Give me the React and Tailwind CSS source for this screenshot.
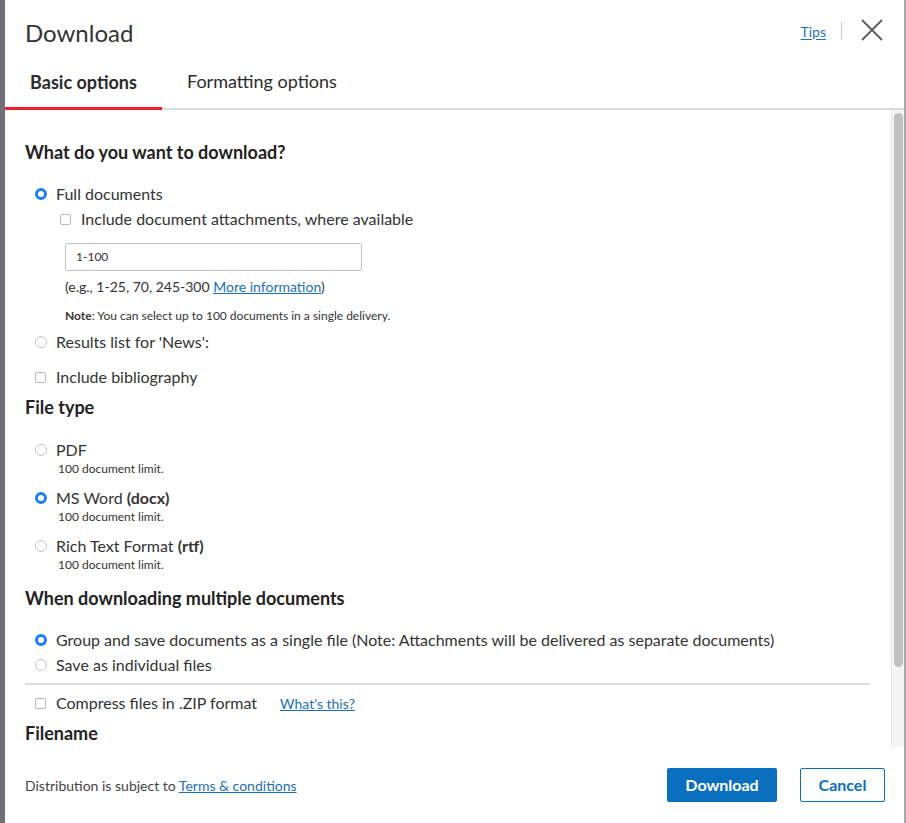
import React from "react";

function Radio({ checked }) {
  return checked ? (
    <span className="inline-block w-[12px] h-[12px] rounded-full bg-[#1a7ef2] border-[3.5px] border-[#1a7ef2] shrink-0">
      <span className="block w-full h-full rounded-full bg-white" />
    </span>
  ) : (
    <span className="inline-block w-[12px] h-[12px] rounded-full border border-[#c4c4c4] bg-white shrink-0" />
  );
}

function Check() {
  return <span className="inline-block w-[11px] h-[11px] rounded-[2px] border border-[#b9b9b9] bg-white shrink-0" />;
}

export default function App() {
  return (
    <div
      className="w-[906px] h-[823px] flex bg-[#6d7075] overflow-hidden text-[#333]"
      style={{ fontFamily: "Lato, 'Open Sans', sans-serif" }}
    >
      <div className="w-[5px] shrink-0" />
      <div className="flex-1 bg-white flex flex-col border-r-2 border-[#a9a9a9]">
        {/* header */}
        <div className="h-[62px] flex items-center pl-[20px] pr-[21px] pt-[4px]">
          <h1 className="text-[24px] text-[#333] flex-1 leading-none">Download</h1>
          <a className="text-[14px] text-[#1d6fb8] underline underline-offset-2 -mt-[4px]">Tips</a>
          <span className="w-px h-[17px] bg-[#c6c6c6] ml-[15px] mr-[19px] -mt-[6px]" />
          <svg width="22" height="22" viewBox="0 0 22 22" className="-mt-[6px]">
            <path d="M1 1L21 21M21 1L1 21" stroke="#5b5b5b" strokeWidth="1.8" fill="none" />
          </svg>
        </div>
        {/* tabs */}
        <div className="flex h-[48px] border-b-2 border-[#dcdcdc]">
          <div className="w-[157px] flex items-center justify-center text-[18px] font-bold text-[#2b2b2b] border-b-[3px] border-[#ee1c2e] -mb-[2px] pb-[4px]">
            Basic options
          </div>
          <div className="pl-[25px] flex items-center text-[18px] text-[#2b2b2b] pb-[7px]">Formatting options</div>
        </div>
        {/* body */}
        <div className="h-[637px] flex">
          <div className="flex-1 pl-[20px] pr-[19px] pt-[30px] overflow-hidden text-[16px]">
            <h2 className="text-[18px] font-bold text-[#222] leading-[24px]">What do you want to download?</h2>
            <div className="mt-[20px] flex items-center gap-[9px] pl-[10px] h-[20px]">
              <Radio checked />
              <span>Full documents</span>
            </div>
            <div className="mt-[5px] flex items-center gap-[10px] pl-[35px] h-[20px]">
              <Check />
              <span>Include document attachments, where available</span>
            </div>
            <div className="mt-[14px] ml-[40px] w-[297px] h-[28px] border border-[#c2c2c2] rounded-[2px] flex items-center pl-[10px] text-[12px] text-[#333]">
              1-100
            </div>
            <div className="mt-[7px] ml-[40px] text-[14px] leading-[18px]">
              (e.g., 1-25, 70, 245-300 <a className="text-[#1d6fb8] underline">More information</a>)
            </div>
            <div className="mt-[12px] ml-[40px] text-[12px] leading-[16px]">
              <b>Note</b>: You can select up to 100 documents in a single delivery.
            </div>
            <div className="mt-[8px] flex items-center gap-[9px] pl-[10px] h-[20px]">
              <Radio />
              <span>Results list for 'News':</span>
            </div>
            <div className="mt-[15px] flex items-center gap-[10px] pl-[10px] h-[20px]">
              <Check />
              <span>Include bibliography</span>
            </div>
            <h2 className="mt-[8px] text-[18px] font-bold text-[#222] leading-[24px]">File type</h2>
            {[
              ["PDF", null, false],
              ["MS Word ", "(docx)", true],
              ["Rich Text Format ", "(rtf)", false],
            ].map(([a, b, c], i) => (
              <div key={i} className={i === 0 ? "mt-[21px]" : "mt-[10px]"}>
                <div className="flex items-center gap-[9px] pl-[10px] h-[20px]">
                  <Radio checked={c} />
                  <span>
                    {a}
                    {b && <b>{b}</b>}
                  </span>
                </div>
                <div className="pl-[33px] text-[12px] leading-[18px]">100 document limit.</div>
              </div>
            ))}
            <h2 className="mt-[12px] text-[18px] font-bold text-[#222] leading-[24px]">When downloading multiple documents</h2>
            <div className="mt-[20px] flex items-center gap-[9px] pl-[10px] h-[20px]">
              <Radio checked />
              <span>Group and save documents as a single file (Note: Attachments will be delivered as separate documents)</span>
            </div>
            <div className="mt-[5px] flex items-center gap-[9px] pl-[10px] h-[20px]">
              <Radio />
              <span>Save as individual files</span>
            </div>
            <div className="mt-[8px] h-[2px] bg-[#dedede] ml-[0px] mr-[2px]" />
            <div className="mt-[8px] flex items-center gap-[10px] pl-[10px] h-[20px]">
              <Check />
              <span>Compress files in .ZIP format</span>
              <a className="ml-[13px] text-[14px] text-[#1d6fb8] underline">What's this?</a>
            </div>
            <h2 className="mt-[8px] text-[18px] font-bold text-[#222] leading-[24px]">Filename</h2>
          </div>
          <div className="w-[13px] bg-[#f5f5f5] border-l border-[#e6e6e6] pt-[3px] flex justify-center">
            <div className="w-[9px] h-[554px] rounded-full bg-[#c1c1c1]" />
          </div>
        </div>
        {/* footer */}
        <div className="flex-1 flex items-center pl-[20px] pr-[19px]">
          <div className="flex-1 text-[14px] text-[#444]">
            Distribution is subject to <a className="text-[#1d6fb8] underline">Terms &amp; conditions</a>
          </div>
          <button className="w-[110px] h-[34px] bg-[#0b6fc0] text-white text-[16px] font-bold rounded-[2px]">Download</button>
          <button className="ml-[23px] w-[85px] h-[34px] border border-[#0b6fc0] text-[#0b6fc0] text-[16px] font-bold rounded-[2px] bg-white">Cancel</button>
        </div>
      </div>
    </div>
  );
}
